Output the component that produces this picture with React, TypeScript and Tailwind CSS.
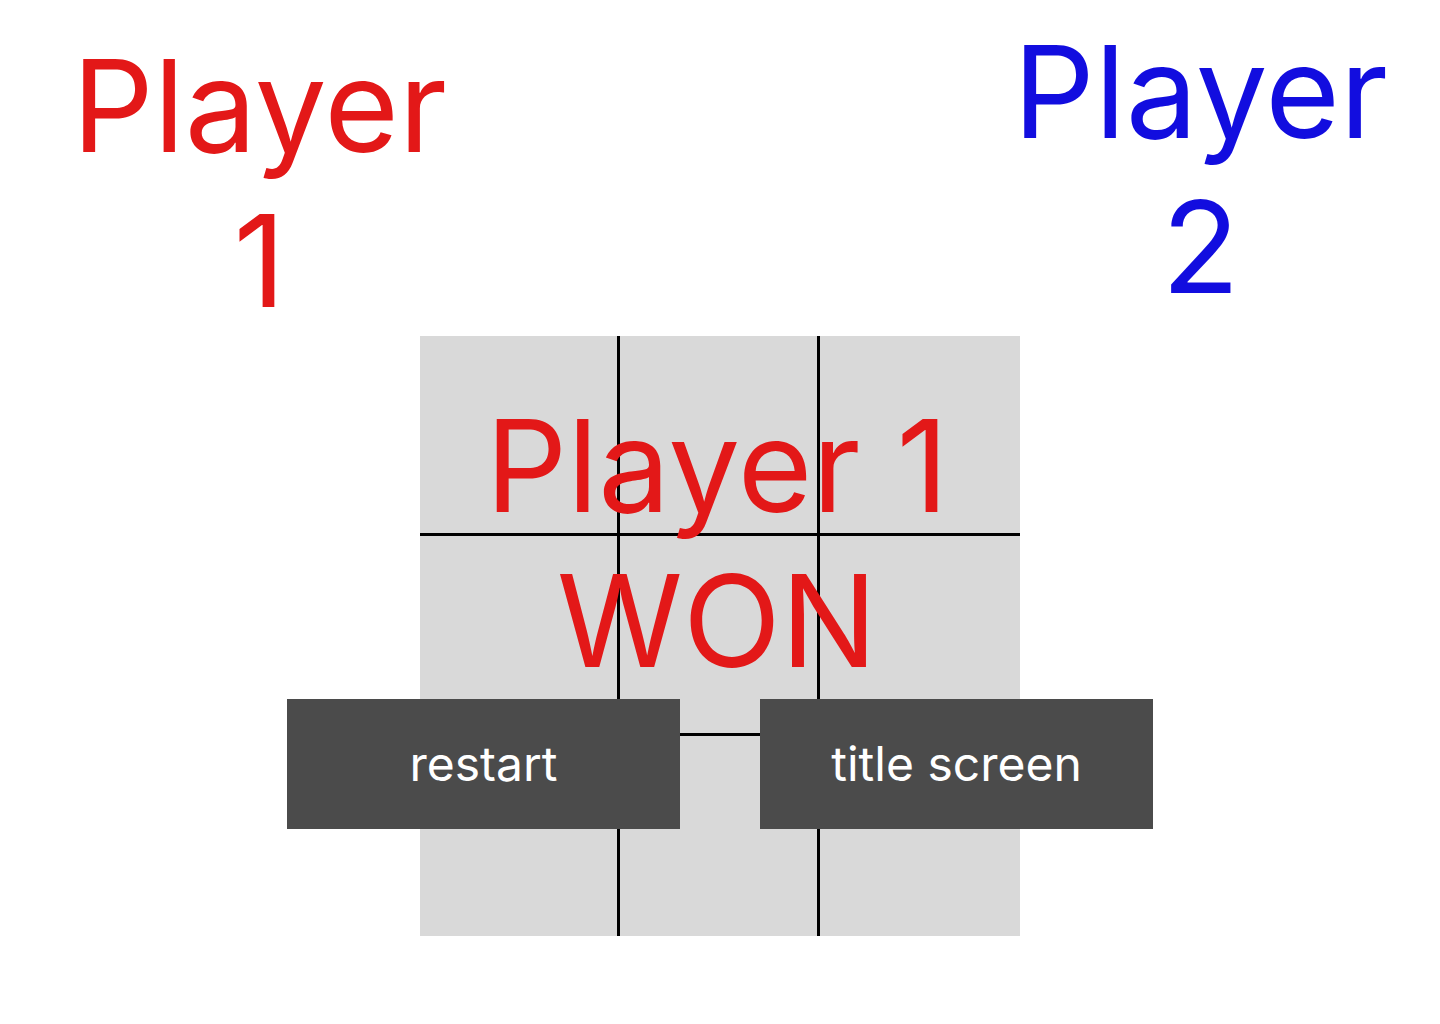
export default function App() {
  const cells = Array.from({ length: 9 }, (_, i) => i);
  return (
    <main className="min-h-screen bg-white pb-22 font-['Inter',sans-serif]">
      <header className="flex h-84 items-start justify-between pt-3.5 pr-1 pl-6 text-center text-[128px] leading-[155px]">
        <h1 className="w-[471px] pt-3.5 text-[#e31818]">Player<br />1</h1>
        <h1 className="w-[471px] text-[#120ddf]">Player<br />2</h1>
      </header>
      <section className="relative" aria-label="Game">
        <div className="mx-auto grid aspect-square w-full max-w-[600px] grid-cols-3 grid-rows-3 bg-[#d9d9d9]">
          {cells.map((i) => (
            <div
              key={i}
              className={`border-black ${i % 3 < 2 ? "border-r-3" : ""} ${i < 6 ? "border-b-3" : ""}`}
            />
          ))}
        </div>
        <div className="absolute inset-x-0 top-[52px] flex flex-col items-center">
          <h2 className="pr-1.5 pb-px text-center text-[128px] leading-[155px] text-[#e31818]">Player 1<br />WON</h2>
          <div className="flex gap-20 text-5xl text-white">
            <button type="button" className="h-[130px] w-[393px] bg-[#4b4b4b]">restart</button>
            <button type="button" className="h-[130px] w-[393px] bg-[#4b4b4b]">title screen</button>
          </div>
        </div>
      </section>
    </main>
  );
}
